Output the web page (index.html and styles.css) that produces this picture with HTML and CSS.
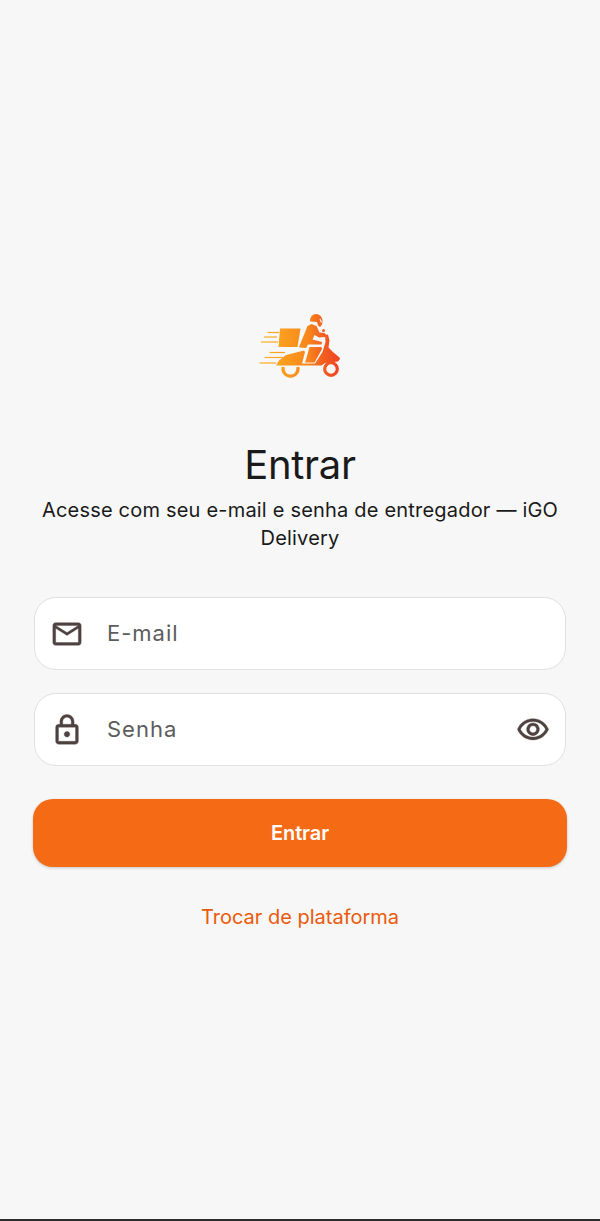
FILE: index.html
```html
<!DOCTYPE html>
<html lang="pt-BR">
<head>
    <meta charset="UTF-8">
    <title>Entrar</title>
    <meta name="viewport" content="width=device-width, initial-scale=1.0">
    <link rel="stylesheet" href="styles.css">
</head>
<body>
    <main class="login">
        <svg class="logo" viewBox="0 0 120 90" width="120" height="90" aria-hidden="true">
            <defs>
                <linearGradient id="logoFill" gradientUnits="userSpaceOnUse" x1="20" y1="45" x2="100" y2="45">
                    <stop offset="0" stop-color="#fbb321"/>
                    <stop offset="0.6" stop-color="#f8861b"/>
                    <stop offset="0.8" stop-color="#f25c20"/>
                    <stop offset="1" stop-color="#ee4423"/>
                </linearGradient>
            </defs>
            <g fill="url(#logoFill)">
                <path d="M40 28.500h20.500l-3 18.500H38.500z"/>
                <path d="M36 65.500l3-5 7-5.500 18-4.500 1 1.500-3 11.500h13l7.500-11.500 3-10-.5-7 3-.5 1.500 6-1 7 5 5 6 5 .5 1.500-2 2.500-13 1.500-3.500 2.500H36z"/>
                <path d="M59 47l4.500-11 4-10 4-2 5 2 3 6.500 5 .5 1.500 1.500-1 2.500-6 .5-4.500-2.500-2 4.500 9.500 2.500-.5 2.500H68l-2 3.500-6.500-.5z"/>
                <path d="M69.500 47h12l.5 2-7.500 13.500h-9.500l2-6.500z"/>
                <path d="M70 21c0-4 2.500-7 6-7s6.500 3 6.500 7c0 3-1 5-2.500 6l-2-1.500-1-3.500-6.500-.5z"/>
                <circle cx="83.500" cy="30.500" r="1.500"/>
            </g>
            <g class="slits">
                <path d="M80 19l1.500 3.500"/>
            </g>
            <g class="speed" stroke="url(#logoFill)">
                <path d="M27.500 32.500h11.500"/>
                <path d="M24 37h13"/>
                <path d="M21 42h17"/>
                <path d="M29.500 52.500h15.500"/>
                <path d="M24.500 57.500h18.500"/>
                <path d="M19.500 63h16.500"/>
            </g>
            <g class="wheels" stroke="url(#logoFill)">
                <path d="M43.200 67A7.500 7.500 0 1 0 57.800 67"/>
                <circle cx="91" cy="69" r="6.300"/>
            </g>
        </svg>

        <h1 class="title">Entrar</h1>
        <p class="subtitle">Acesse com seu e-mail e senha de entregador — iGO Delivery</p>

        <form class="form">
            <label class="field">
                <svg class="icon" viewBox="0 0 24 24" width="34" height="34" aria-hidden="true">
                    <path d="M20 4H4c-1.100 0-1.990.9-1.990 2L2 18c0 1.100.9 2 2 2h16c1.100 0 2-.9 2-2V6c0-1.100-.9-2-2-2zm0 14H4V8l8 5 8-5v10zm-8-7L4 6h16l-8 5z"/>
                </svg>
                <span class="placeholder">E-mail</span>
            </label>

            <label class="field">
                <svg class="icon" viewBox="0 0 24 24" width="34" height="34" aria-hidden="true">
                    <path d="M18 8h-1V6c0-2.760-2.240-5-5-5S7 3.240 7 6v2H6c-1.100 0-2 .9-2 2v10c0 1.100.9 2 2 2h12c1.100 0 2-.9 2-2V10c0-1.100-.9-2-2-2zM9 6c0-1.660 1.340-3 3-3s3 1.340 3 3v2H9V6zm9 14H6V10h12v10zm-6-3c1.100 0 2-.9 2-2s-.9-2-2-2-2 .9-2 2 .9 2 2 2z"/>
                </svg>
                <span class="placeholder">Senha</span>
                <svg class="icon eye" viewBox="0 0 24 24" width="34" height="34" aria-hidden="true">
                    <path d="M12 6c3.790 0 7.170 2.130 8.820 5.500C19.170 14.870 15.790 17 12 17s-7.170-2.130-8.820-5.500C4.830 8.130 8.210 6 12 6m0-2C7 4 2.730 7.110 1 11.500 2.730 15.890 7 19 12 19s9.270-3.110 11-7.500C21.270 7.110 17 4 12 4zm0 5c1.380 0 2.500 1.120 2.500 2.500S13.380 14 12 14s-2.500-1.120-2.500-2.500S10.620 9 12 9m0-2c-2.480 0-4.500 2.020-4.500 4.500S9.520 16 12 16s4.500-2.020 4.500-4.500S14.480 7 12 7z"/>
                </svg>
            </label>

            <button class="submit" type="button">Entrar</button>
        </form>

        <a class="switch" href="#">Trocar de plataforma</a>
    </main>
    <div class="edge"></div>
</body>
</html>
```

FILE: styles.css
```css
html, body {
    height: 100%;
}
body {
    font-family: 'Inter', sans-serif;
    background: #f7f7f7;
    color: #1a1a1a;
    margin: 0;
    display: flex;
    flex-direction: column;
}
.login {
    flex: 1;
    display: flex;
    flex-direction: column;
    align-items: center;
    padding: 300px 33px 0;
}
.logo {
    display: block;
}
.title {
    font-size: 40px;
    line-height: 48px;
    font-weight: 400;
    letter-spacing: -0.3px;
    margin: 51px 0 0;
}
.subtitle {
    font-size: 20px;
    line-height: 28px;
    letter-spacing: 0.2px;
    text-align: center;
    color: #1a1a1a;
    margin: 7px 0 0;
}
.form {
    width: 100%;
    display: flex;
    flex-direction: column;
    margin-top: 45px;
}
.field {
    height: 73px;
    box-sizing: border-box;
    background: #fff;
    border: 1.5px solid #e0e0e0;
    border-radius: 22px;
    display: flex;
    align-items: center;
    padding: 0 15px;
    margin: 0 1px 23px;
}
.icon {
    fill: #4e4240;
    stroke: #4e4240;
    stroke-width: 0.25;
    flex: none;
}
.placeholder {
    font-size: 22px;
    letter-spacing: 1px;
    color: #5c5c5c;
    margin-left: 23px;
    padding-bottom: 2px;
    flex: 1;
}
.submit {
    height: 68px;
    font-family: 'Inter', sans-serif;
    font-size: 20px;
    font-weight: 600;
    letter-spacing: -0.1px;
    color: #fff;
    background: #f56a14;
    border: none;
    border-radius: 20px;
    box-shadow: 0 1px 3px rgba(0,0,0,0.2);
    margin: 10px 0 0 0;
}
.switch {
    font-size: 20px;
    line-height: 28px;
    color: #ea5a0c;
    text-decoration: none;
    margin-top: 36px;
}
.speed {
    fill: none;
    stroke-width: 1.2;
}
.wheels {
    fill: none;
    stroke-width: 3.2;
}
.slits {
    fill: none;
    stroke: #f7f7f7;
    stroke-width: 1.2;
}
.edge {
    height: 2px;
    background: #2b2b2b;
    flex: none;
}
```
